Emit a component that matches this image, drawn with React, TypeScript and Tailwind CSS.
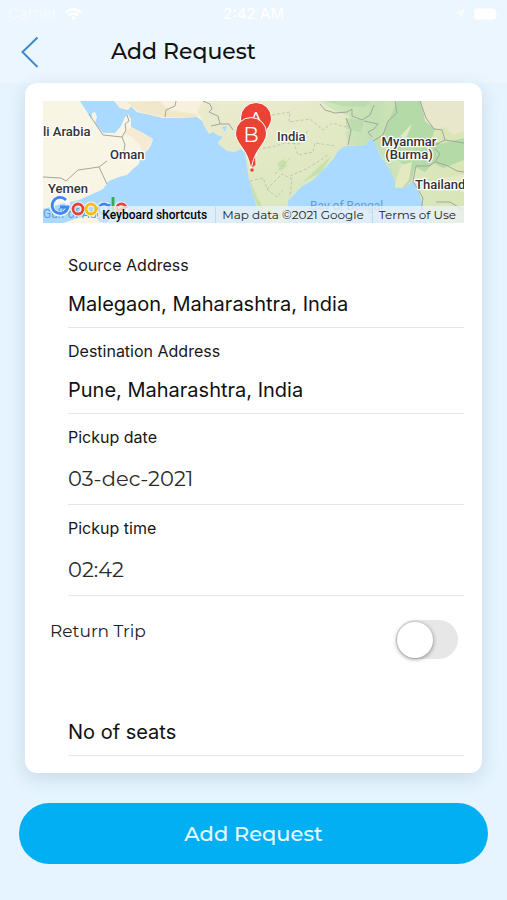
import { useState } from "react";

const INTER = "font-['Inter','Liberation_Sans',sans-serif]";
const MONT = "font-['Montserrat','Inter','Liberation_Sans',sans-serif]";

function StatusBar() {
  return (
    <div className="flex h-7 items-center justify-between px-2 text-[15px] text-white">
      <div className="flex flex-1 items-center gap-2">
        <span className="opacity-60">Carrier</span>
        <svg width="17" height="13" viewBox="0 0 17 13" fill="none" stroke="currentColor" strokeWidth="2.6" aria-hidden="true">
          <path d="M1 4.5Q8.5-2 16 4.5M3.8 7.5Q8.5 3.5 13.2 7.5" />
          <path d="M6 9.2Q8.5 7.2 11 9.2L8.5 12Z" fill="currentColor" stroke="none" />
        </svg>
      </div>
      <span className="font-medium">2:42 AM</span>
      <div className="flex flex-1 items-center justify-end gap-2">
        <svg width="12" height="12" viewBox="0 0 12 12" fill="currentColor" opacity=".7" aria-hidden="true">
          <path d="M11.5.5 7 11.5 6 6 .5 5Z" />
        </svg>
        <svg width="25" height="12" viewBox="0 0 25 12" fill="currentColor" aria-hidden="true">
          <rect width="22" height="11" y=".5" rx="3" />
          <path d="M23 4q2 2 0 4Z" />
        </svg>
      </div>
    </div>
  );
}

function Pin({ x, y, letter }: { x: number; y: number; letter: string }) {
  return (
    <g transform={`translate(${x} ${y})`}>
      <path
        d="M0 0C-1-8-3-15-8-22C-12-28-15.500-32-15.500-38A15.500 15.500 0 0 1 15.500-38C15.500-32 12-28 8-22C3-15 1-8 0 0Z"
        fill="#ea4335"
        stroke="#fff"
        strokeWidth="1"
      />
      <text x="0" y="-29" textAnchor="middle" fontSize="20" fill="#fff">
        {letter}
      </text>
    </g>
  );
}

function RouteMap() {
  return (
    <div className="relative h-[122px] overflow-hidden bg-[#aadaff]">
      <svg
        className="block h-full w-full font-['Roboto','Liberation_Sans',sans-serif]"
        viewBox="0 0 421 122"
        preserveAspectRatio="xMidYMid slice"
        role="img"
        aria-label="Map of the route"
      >
        <defs>
          <linearGradient id="indiaLand" x1="0" x2="1" y1="0" y2="1">
            <stop offset="0" stopColor="#f1ecd3" />
            <stop offset=".5" stopColor="#e0e8c3" />
            <stop offset="1" stopColor="#d2e9bf" />
          </linearGradient>
          <linearGradient id="eastLand" x1="0" x2="1">
            <stop offset="0" stopColor="#d3e7bc" />
            <stop offset=".4" stopColor="#c3e0b3" />
            <stop offset=".65" stopColor="#dbe6bd" />
            <stop offset="1" stopColor="#d8e6b6" />
          </linearGradient>
        </defs>
        <rect width="421" height="122" fill="#aadaff" />

        {/* Arabian peninsula */}
        <path
          d="M0 0H37L42 8L46 14L48 18L49 12L52 11L54 16L52 22L56 27L60 32L72 32L78 25L82 16L85 13L88 18L88 26L100 32L110 38L108 44L105 49L98 54L96 63L90 68L84 74L76 76L66 80L60 88L54 91L36 99L18 103L0 108Z"
          fill="#f9f5e5"
        />
        <path d="M88 26L100 32L110 38L105 49L98 54L98 45L88 35L79 33Z" fill="#f6ead4" />
        <path d="M20 122L38 116L53 113L60 122Z" fill="#f9f5e5" />

        {/* Iran, Pakistan and India */}
        <path
          d="M71 0L77 7L85 9L88 5L94 11L108 13L120 17L138 17L154 16L160 21L168 29L174 34L180 36L176 40L175 43L184 50L192 51L198 48L202 52L204 66L206 78L210 94L215 109L221 122H244L245 100L250 95L258 86L270 79L284 65L291 57L295 50L302 45L322 44L329 36L334 47L339 57L347 69L352 79L352 87L360 87L370 80L377 94L383 110L385 122H421V0Z"
          fill="url(#indiaLand)"
        />
        <path d="M71 0H160L154 10L160 20L154 16L120 17L94 11L88 5L85 9L77 7Z" fill="#f7f0dc" />
        <path d="M84 1L116 0L126 9L154 13L153 16L120 16L97 11Z" fill="#f1e7cb" />

        {/* Eastern hills */}
        <path
          d="M277 0L290 9L306 15L310 27L302 31L306 44L322 44L329 36L334 47L347 69L352 79L352 87L360 87L370 80L377 94L385 122H421V0Z"
          fill="url(#eastLand)"
        />
        <path d="M377 0H421V30L410 34L401 26L387 29L379 20Z" fill="#e9e7cb" />
        <path d="M354 0H378L382 20L392 28L389 37L397 43L421 37V59L400 67L390 62L382 71L372 66L368 80L360 87L362 65L350 54L341 31Z" fill="#b4daa8" />
        <path d="M359 64L369 61L366 79L359 87L352 86L354 76ZM357 35L369 23L362 40ZM396 78L421 73V91L400 88Z" fill="#e4e9c2" />
        <path d="M281 0H328L322 6L300 5ZM303 17L321 20L318 31L303 28Z" fill="#b5daa8" opacity=".7" />
        <path d="M234 62L241 58L244 65L238 70ZM259 82L282 60L288 56L278 71ZM207 78L213 94L221 109L226 122H222L210 94Z" fill="#badd9f" opacity=".65" />
        <path d="M159 9L174 1L176 17L186 29L177 28L166 33L160 23Z" fill="#e8ebcb" />
        <path d="M179 26L184 25L182 31Z" fill="#aadaff" />

        {/* Borders */}
        <g fill="none" stroke="#a3a69f" strokeWidth="1" strokeLinejoin="round">
          <path d="M46 13L52 22L60 34L79 36L83 29L82 23L86 20L84 14M79 36L82 44L80 54M0 76L18 77L23 80L35 69L56 66L64 60M56 66L64 83M133 0L132 5L123 9L122 16M160 0L167 3L169 8L166 11L175 15L177 23L186 23L190 29M168 25L177 23M277 3L282 9L292 12L304 11L309 8L309 15L319 19L327 14L331 4M303 17L308 29L305 44M321 20L335 23L331 28L325 31L329 36M352 0L354 12L345 20L340 34L330 40M377 0L383 17L391 28L399 29L402 39M402 39L394 43L389 44L397 53L392 61L386 65L373 65L370 80L380 97L378 110M393 61L405 65L414 70L421 71M402 39L421 42M393 101L407 101L420 109" />
        </g>
        <g fill="none" stroke="#b9bda9" strokeWidth=".8" strokeDasharray="3 2">
          <path d="M229 14L247 11L246 21L267 18L280 29L289 22L303 26M215 48L229 46L242 42L257 43L265 29M249 36L255 54L270 51L272 42L293 45M207 80L220 77L225 89L234 96L240 89M224 88L239 73L249 78L247 96M232 73L247 57M247 75L263 68L276 60L286 53" />
        </g>

        {/* Place names */}
        <g fontSize="13" fontWeight="500" fill="#333" stroke="#fff" strokeWidth="2.5" strokeLinejoin="round" paintOrder="stroke">
          <text x="0" y="35">li Arabia</text>
          <text x="67" y="58">Oman</text>
          <text x="5" y="92">Yemen</text>
          <text x="234" y="40">India</text>
          <text x="366" y="45" textAnchor="middle">Myanmar</text>
          <text x="366" y="58" textAnchor="middle">(Burma)</text>
          <text x="372" y="88">Thailand</text>
        </g>
        <g fontSize="12" fill="#659ad8">
          <text x="267" y="109">Bay of Bengal</text>
          <text x="0" y="117">Gulf of Aden</text>
        </g>
        <g className="font-['Montserrat','Inter','Liberation_Sans',sans-serif]">
          <Pin x={213} y={55} letter="A" />
          <path d="M212 48L213 64L208 68Z" fill="#ea4335" stroke="#fff" strokeWidth=".8" />
          <Pin x={208} y={70} letter="B" />
        </g>
        <circle cx="209" cy="69" r="1.8" fill="#ea4335" />

        {/* Provider logo */}
        <g fill="none" stroke="#fff" strokeWidth="5" opacity=".8">
          <circle cx="17" cy="105" r="8" />
          <circle cx="35" cy="108" r="5" />
          <circle cx="48" cy="108" r="5" />
          <circle cx="61" cy="108" r="5" />
          <circle cx="78" cy="108" r="5" />
        </g>
        <g fill="none" strokeWidth="2.8">
          <path d="M23 99A8 8 0 1 0 25 106H17" stroke="#4285f4" />
          <circle cx="35" cy="108" r="5" stroke="#ea4335" />
          <circle cx="48" cy="108" r="5" stroke="#fbbc04" />
          <path d="M66 103V115Q66 120 61 120T56 117M66 108A5 5 0 1 1 56 108A5 5 0 0 1 66 108Z" stroke="#4285f4" />
          <path d="M70 96V114" stroke="#34a853" />
          <path d="M74 110L83 106Q81 102 77 103T74 110Q77 115 83 111" stroke="#ea4335" />
        </g>
      </svg>
      <div className={`absolute right-0 bottom-0 flex h-[17px] items-center bg-[#ebf1f5]/80 text-[12px] leading-4 whitespace-nowrap text-[#222] ${MONT}`}>
        <button type="button" className="pr-2 pl-1 font-['Roboto','Liberation_Sans',sans-serif] font-medium text-black">
          Keyboard shortcuts
        </button>
        <span className="border-l border-[#bcdaf0] pr-2 pl-1.5">Map data ©2021 Google</span>
        <a href="#terms" className="border-l border-[#bcdaf0] pr-2 pl-1.5">
          Terms of Use
        </a>
      </div>
    </div>
  );
}

type FieldProps = { id: string; label: string; initial: string; picker?: boolean };

function Field({ id, label, initial, picker = false }: FieldProps) {
  const [value, setValue] = useState(initial);
  return (
    <div className="flex flex-col pt-3">
      <label htmlFor={id} className="text-[16px] leading-[22px] text-[#171717]">
        {label}
      </label>
      <input
        id={id}
        type="text"
        value={value}
        onChange={(e) => setValue(e.target.value)}
        className={`mt-1 w-full border-b border-[#e6e6e6] bg-transparent outline-none ${
          picker ? `h-[53px] text-[21px] text-[#2b2b2b] ${MONT}` : "h-12 text-[20px] text-[#111]"
        }`}
      />
    </div>
  );
}

export default function App() {
  const [returnTrip, setReturnTrip] = useState(false);
  return (
    <div className={`min-h-screen bg-[#e5f4fe] ${INTER}`}>
      <header className="h-[83px] bg-[#ebf6ff]">
        <StatusBar />
        <div className="flex h-12 items-center pl-5">
          <button type="button" aria-label="Back" className="w-[91px] text-[#4089cc]">
            <svg width="20" height="32" viewBox="0 0 20 32" fill="none" stroke="currentColor" strokeWidth="2" aria-hidden="true">
              <path d="M17.500 1.500 2.500 16 17.500 31" />
            </svg>
          </button>
          <h1 className={`text-[22px] leading-8 font-medium text-[#111] ${MONT}`}>Add Request</h1>
        </div>
      </header>

      <form onSubmit={(e) => e.preventDefault()} className="pb-9">
        <section className="mx-[25px] rounded-xl bg-white px-[18px] pt-[18px] pb-[17px] shadow-[0_5px_18px_rgba(70,100,130,0.18)]">
          <RouteMap />
          <div className="mt-[19px] pl-[25px]">
            <Field id="source" label="Source Address" initial="Malegaon, Maharashtra, India" />
            <Field id="destination" label="Destination Address" initial="Pune, Maharashtra, India" />
            <Field id="date" label="Pickup date" initial="03-dec-2021" picker />
            <Field id="time" label="Pickup time" initial="02:42" picker />
          </div>
          <div className="flex items-start justify-between pt-6 pr-1.5 pl-[7px]">
            <label htmlFor="return" className={`text-[17px] leading-[22px] text-[#222] ${MONT}`}>
              Return Trip
            </label>
            <input
              id="return"
              type="checkbox"
              role="switch"
              checked={returnTrip}
              onChange={(e) => setReturnTrip(e.target.checked)}
              className="flex h-[39px] w-[62px] appearance-none items-center rounded-full bg-[#e7e7e7] p-px transition-colors before:size-9 before:rounded-full before:bg-white before:shadow-[0_1px_4px_rgba(0,0,0,0.45)] before:transition-transform checked:bg-[#02aff2] checked:before:translate-x-6"
            />
          </div>
          <div className="mt-[49px] pl-[25px]">
            <input
              type="text"
              aria-label="No of seats"
              placeholder="No of seats"
              className="h-12 w-full border-b border-[#e6e6e6] bg-transparent text-[20px] text-[#111] outline-none placeholder:text-[#111]"
            />
          </div>
        </section>
        <div className="mt-[30px] px-[19px]">
          <button type="submit" className={`h-[61px] w-full rounded-full bg-[#02aff2] text-[21px] font-medium text-[#eafaff] ${MONT}`}>
            Add Request
          </button>
        </div>
      </form>
    </div>
  );
}
